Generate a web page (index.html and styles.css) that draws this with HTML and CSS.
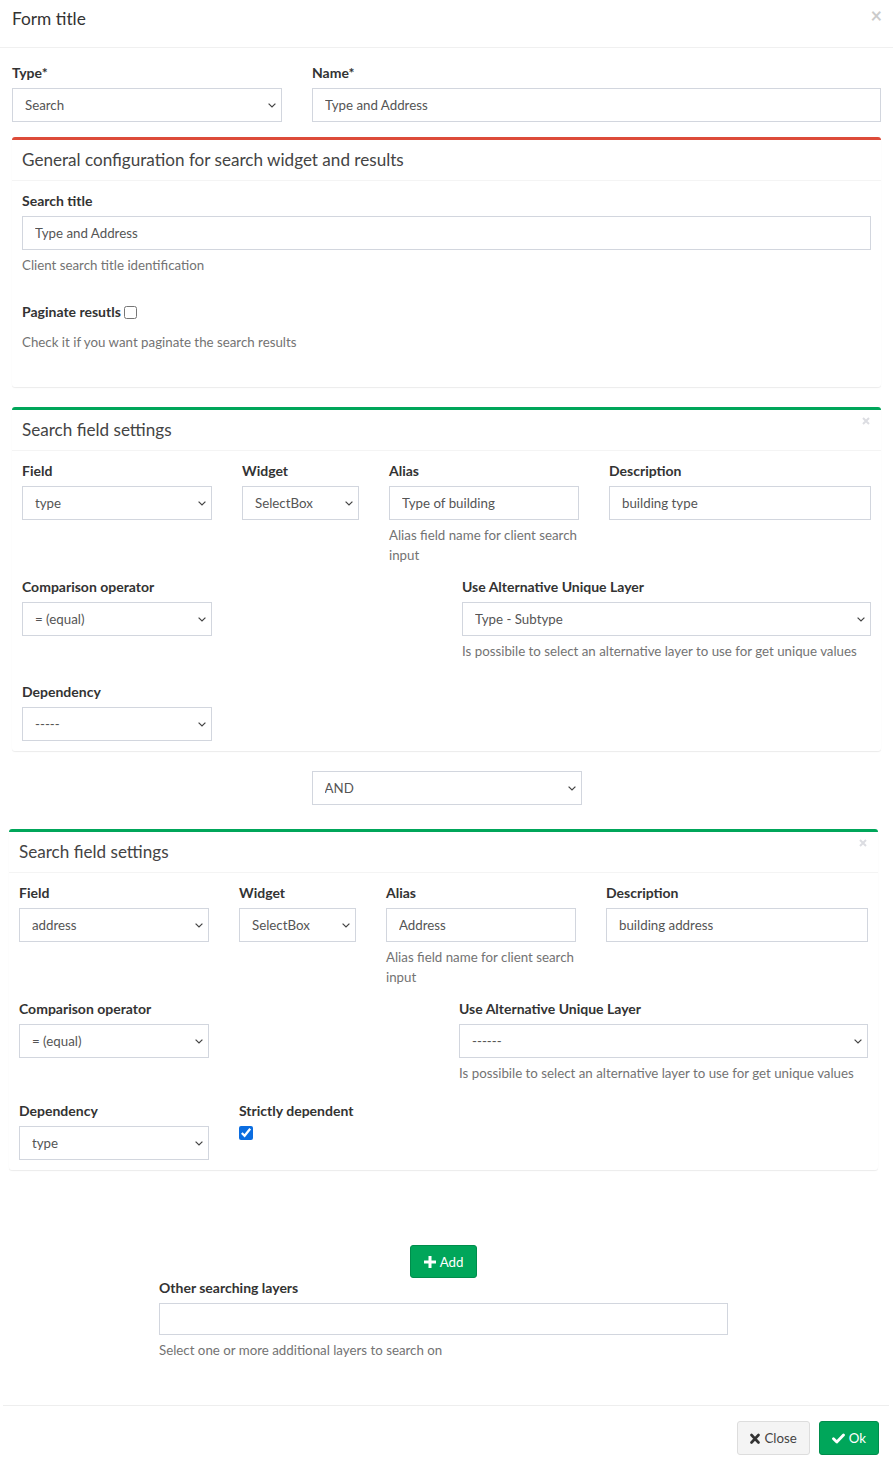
FILE: index.html
```html
<!DOCTYPE html>
<html>
<head>
<meta charset="utf-8">
<title>Form title</title>
<link rel="stylesheet" href="styles.css">
</head>
<body>
<div class="modal">
  <div class="modal-header">
    <h4 class="modal-title">Form title</h4>
    <span class="close">×</span>
  </div>
  <div class="modal-body">
    <div class="top-row">
      <div>
        <label>Type*</label>
        <div class="sel"><select class="ctl"><option>Search</option></select><svg class="chev" width="8" height="5" viewBox="0 0 8 5"><path d="M0.6 0.6L4 4L7.4 0.6" fill="none" stroke="#444" stroke-width="1.2"/></svg></div>
      </div>
      <div>
        <label>Name*</label>
        <input class="ctl" type="text" value="Type and Address">
      </div>
    </div>

    <div class="box box-danger">
      <div class="box-header"><h3 class="box-title">General configuration for search widget and results</h3></div>
      <div class="box-body">
        <div class="fg-first">
          <label>Search title</label>
          <input class="ctl" type="text" value="Type and Address">
          <p class="help">Client search title identification</p>
        </div>
        <div class="fg-last">
          <label>Paginate resutls <input type="checkbox" class="chk-inline"></label>
          <p class="help">Check it if you want paginate the search results</p>
        </div>
      </div>
    </div>

    <div class="box box-success">
      <div class="box-header">
        <h3 class="box-title">Search field settings</h3>
        <span class="box-close"><svg width="8" height="8" viewBox="0 0 8 8"><path d="M1 1L7 7M7 1L1 7" stroke="#dcdde2" stroke-width="2"/></svg></span>
      </div>
      <div class="box-body">
        <div class="grid4 r1">
          <div><label>Field</label><div class="sel"><select class="ctl"><option>type</option></select><svg class="chev" width="8" height="5" viewBox="0 0 8 5"><path d="M0.6 0.6L4 4L7.4 0.6" fill="none" stroke="#444" stroke-width="1.2"/></svg></div></div>
          <div><label>Widget</label><div class="sel"><select class="ctl"><option>SelectBox</option></select><svg class="chev" width="8" height="5" viewBox="0 0 8 5"><path d="M0.6 0.6L4 4L7.4 0.6" fill="none" stroke="#444" stroke-width="1.2"/></svg></div></div>
          <div><label>Alias</label><input class="ctl" type="text" value="Type of building"><p class="help">Alias field name for client search input</p></div>
          <div><label>Description</label><input class="ctl" type="text" value="building type"></div>
        </div>
        <div class="split r2">
          <div class="col-l"><label>Comparison operator</label><div class="sel"><select class="ctl"><option>= (equal)</option></select><svg class="chev" width="8" height="5" viewBox="0 0 8 5"><path d="M0.6 0.6L4 4L7.4 0.6" fill="none" stroke="#444" stroke-width="1.2"/></svg></div></div>
          <div class="col-r"><label>Use Alternative Unique Layer</label><div class="sel"><select class="ctl"><option>Type - Subtype</option></select><svg class="chev" width="8" height="5" viewBox="0 0 8 5"><path d="M0.6 0.6L4 4L7.4 0.6" fill="none" stroke="#444" stroke-width="1.2"/></svg></div><p class="help">Is possibile to select an alternative layer to use for get unique values</p></div>
        </div>
        <div class="grid4">
          <div><label>Dependency</label><div class="sel"><select class="ctl"><option>-----</option></select><svg class="chev" width="8" height="5" viewBox="0 0 8 5"><path d="M0.6 0.6L4 4L7.4 0.6" fill="none" stroke="#444" stroke-width="1.2"/></svg></div></div>
        </div>
      </div>
    </div>

    <div class="op-row"><div class="sel op"><select class="ctl"><option>AND</option></select><svg class="chev" width="8" height="5" viewBox="0 0 8 5"><path d="M0.6 0.6L4 4L7.4 0.6" fill="none" stroke="#444" stroke-width="1.2"/></svg></div></div>

    <div class="box box-success shifted">
      <div class="box-header">
        <h3 class="box-title">Search field settings</h3>
        <span class="box-close"><svg width="8" height="8" viewBox="0 0 8 8"><path d="M1 1L7 7M7 1L1 7" stroke="#dcdde2" stroke-width="2"/></svg></span>
      </div>
      <div class="box-body">
        <div class="grid4 r1">
          <div><label>Field</label><div class="sel"><select class="ctl"><option>address</option></select><svg class="chev" width="8" height="5" viewBox="0 0 8 5"><path d="M0.6 0.6L4 4L7.4 0.6" fill="none" stroke="#444" stroke-width="1.2"/></svg></div></div>
          <div><label>Widget</label><div class="sel"><select class="ctl"><option>SelectBox</option></select><svg class="chev" width="8" height="5" viewBox="0 0 8 5"><path d="M0.6 0.6L4 4L7.4 0.6" fill="none" stroke="#444" stroke-width="1.2"/></svg></div></div>
          <div><label>Alias</label><input class="ctl" type="text" value="Address"><p class="help">Alias field name for client search input</p></div>
          <div><label>Description</label><input class="ctl" type="text" value="building address"></div>
        </div>
        <div class="split r2 r2b">
          <div class="col-l"><label>Comparison operator</label><div class="sel"><select class="ctl"><option>= (equal)</option></select><svg class="chev" width="8" height="5" viewBox="0 0 8 5"><path d="M0.6 0.6L4 4L7.4 0.6" fill="none" stroke="#444" stroke-width="1.2"/></svg></div></div>
          <div class="col-r"><label>Use Alternative Unique Layer</label><div class="sel"><select class="ctl"><option>------</option></select><svg class="chev" width="8" height="5" viewBox="0 0 8 5"><path d="M0.6 0.6L4 4L7.4 0.6" fill="none" stroke="#444" stroke-width="1.2"/></svg></div><p class="help">Is possibile to select an alternative layer to use for get unique values</p></div>
        </div>
        <div class="grid4">
          <div><label>Dependency</label><div class="sel"><select class="ctl"><option>type</option></select><svg class="chev" width="8" height="5" viewBox="0 0 8 5"><path d="M0.6 0.6L4 4L7.4 0.6" fill="none" stroke="#444" stroke-width="1.2"/></svg></div></div>
          <div><label>Strictly dependent</label><input type="checkbox" class="chk" checked></div>
        </div>
      </div>
    </div>

    <div class="bottom">
      <button class="btn btn-success btn-add"><svg width="12" height="12" viewBox="0 0 12 12"><path d="M4.5 0h3v4.5H12v3H7.5V12h-3V7.5H0v-3h4.5z" fill="#fff"/></svg>Add</button>
      <div class="other">
        <label>Other searching layers</label>
        <input class="ctl ctl-sm" type="text">
        <p class="help">Select one or more additional layers to search on</p>
      </div>
    </div>
  </div>
  <div class="modal-footer">
    <button class="btn btn-default"><svg width="10" height="11" viewBox="0 0 10 11"><path d="M1.5 2L8.5 9.5M8.5 2L1.5 9.5" stroke="#333" stroke-width="2.6" stroke-linecap="round"/></svg>Close</button>
    <button class="btn btn-success"><svg width="13" height="11" viewBox="0 0 13 11"><path d="M1.5 5.8L4.8 9L11.5 2" stroke="#fff" stroke-width="2.8" fill="none" stroke-linecap="round" stroke-linejoin="round"/></svg>Ok</button>
  </div>
</div>
</body>
</html>
```
FILE: styles.css
```css
* { box-sizing: border-box; }
html, body { margin: 0; padding: 0; background: #fff; }
body {
  font-family: Lato, "Liberation Sans", sans-serif;
  font-size: 13.3px;
  line-height: 20px;
  color: #333;
}
.modal { width: 893px; }
.modal-header {
  position: relative;
  padding: 6px 12px 15px;
  border-bottom: 1px solid #f0f0f0;
}
.modal-title {
  margin: 0;
  font-size: 17.3px;
  font-weight: 400;
  line-height: 26px;
  color: #333;
}
.close {
  position: absolute;
  right: 11px;
  top: 3px;
  font-size: 20px;
  font-weight: 700;
  line-height: 24px;
  color: #000;
  opacity: 0.2;
}
.modal-body { padding: 15px 12px 45px; }
label {
  display: block;
  font-size: 14px;
  font-weight: 700;
  margin-bottom: 5px;
  line-height: 20px;
  color: #333;
}
.ctl {
  display: block;
  width: 100%;
  height: 34px;
  padding: 6px 12px;
  font-family: inherit;
  font-size: 13.3px;
  line-height: 20px;
  color: #555;
  background-color: #fff;
  border: 1px solid #d2d6de;
  border-radius: 0;
  margin: 0;
  outline: none;
}
.sel { position: relative; }
.sel select.ctl {
  -webkit-appearance: none;
  appearance: none;
  padding: 6px 24px 6px 12px;
}
.chev {
  position: absolute;
  right: 6px;
  top: 15px;
  display: block;
  pointer-events: none;
}
.ctl-sm { height: 32px; }
.help {
  margin: 5px 0 0;
  color: #737373;
  line-height: 20px;
}
.top-row {
  display: grid;
  grid-template-columns: 270px 1fr;
  column-gap: 30px;
  margin-bottom: 15px;
}
.box {
  position: relative;
  background: #fff;
  border-top: 3px solid #d2d6de;
  border-radius: 3px;
  box-shadow: 0 1px 1px rgba(0,0,0,0.08);
  margin-bottom: 20px;
}
.box-danger { border-top-color: #dd4b39; }
.box-success { border-top-color: #00a65a; }
.shifted { margin-left: -3px; margin-right: 3px; }
.box-header {
  position: relative;
  padding: 10px;
  border-bottom: 1px solid #f4f4f4;
}
.box-title {
  margin: 0;
  font-size: 17.1px;
  font-weight: 400;
  line-height: 20px;
  color: #444;
}
.box-close {
  position: absolute;
  right: 11px;
  top: 7px;
  width: 8px;
  height: 8px;
  display: block;
}
.box-close svg { display: block; }
.box-body { padding: 10px; }
.fg-first { padding-bottom: 27px; }
.fg-last .help { margin-top: 10px; margin-bottom: 25px; }
.chk-inline {
  display: inline-block;
  vertical-align: -2px;
  width: 13px;
  height: 13px;
  margin: 0;
}
.grid4 {
  display: grid;
  grid-template-columns: 190px 117px 190px 1fr;
  column-gap: 30px;
  align-items: start;
}
.r1 { margin-bottom: 12px; }
.split {
  display: flex;
  justify-content: space-between;
  align-items: flex-start;
}
.col-l { width: 190px; }
.col-r { width: 409px; }
.r2 { margin-bottom: 21px; }
.r2b { margin-bottom: 18px; }
.chk {
  display: block;
  width: 14px;
  height: 14px;
  margin: 3px 0 0;
  accent-color: #0b6de0;
}
.op-row { margin-bottom: 24px; }
.op { width: 270px; margin: 0 auto; }
.bottom {
  margin: 75px 3px 0 -3px;
  text-align: center;
}
.other {
  width: 569px;
  margin: 0 auto;
  text-align: left;
}
.btn {
  display: inline-flex;
  align-items: center;
  gap: 4px;
  font-family: inherit;
  font-size: 13.3px;
  line-height: 20px;
  padding: 6px 12px;
  border: 1px solid transparent;
  border-radius: 3px;
  cursor: pointer;
}
.btn svg { display: block; }
.btn-success {
  background: #00a65a;
  border-color: #008d4c;
  color: #fff;
}
.btn-default {
  background: #f4f4f4;
  border-color: #ddd;
  color: #444;
}
.btn-add { height: 33px; padding: 6px 13px 6px 13px; }
.modal-footer {
  margin: 0 4px 0 3px;
  padding: 15px 10px 18px;
  border-top: 1px solid #eeeeee;
  display: flex;
  justify-content: flex-end;
  gap: 9px;
}
.modal-footer .btn { height: 34px; }
```
